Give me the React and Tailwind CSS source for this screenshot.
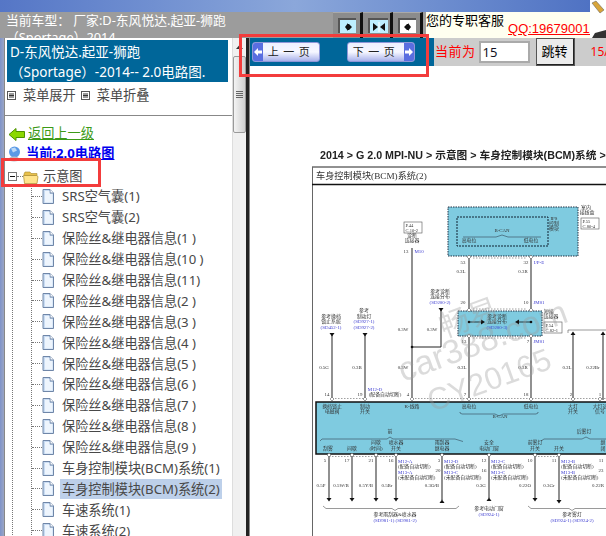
const cjk = '"Noto Sans", "Noto Sans CJK SC", sans-serif'
const arial = '"Liberation Sans", "Noto Sans CJK SC", sans-serif'

const treeItems = [
  'SRS空气囊(1)',
  'SRS空气囊(2)',
  '保险丝&继电器信息(1 )',
  '保险丝&继电器信息(10 )',
  '保险丝&继电器信息(11)',
  '保险丝&继电器信息(2 )',
  '保险丝&继电器信息(3 )',
  '保险丝&继电器信息(4 )',
  '保险丝&继电器信息(5 )',
  '保险丝&继电器信息(6 )',
  '保险丝&继电器信息(7 )',
  '保险丝&继电器信息(8 )',
  '保险丝&继电器信息(9 )',
  '车身控制模块(BCM)系统(1)',
  '车身控制模块(BCM)系统(2)',
  '车速系统(1)',
  '车速系统(2)',
]

function DocIcon() {
  return (
    <svg width="12" height="15" viewBox="0 0 12 15" className="shrink-0">
      <path d="M1 .5h7l3.500 3.500v10.500h-10.500z" fill="#c9dcf3" stroke="#6f86a8" />
      <path d="M8 .5v3.500h3.500" fill="#fff" stroke="#6f86a8" />
      <path d="M3 2h4.500v3h3v8.500h-7.500z" fill="#eef5fd" />
    </svg>
  )
}

function MiniMenuIcon() {
  return (
    <svg width="9" height="9" viewBox="0 0 9 9" className="shrink-0">
      <rect x=".5" y=".5" width="8" height="8" fill="#fff" stroke="#555" />
      <path d="M2 3h5M2 4.500h5M2 6h5" stroke="#333" />
    </svg>
  )
}

function PageButton({ dir, label }) {
  const prev = dir === 'prev'
  return (
    <button className={`w-[68px] h-[20px] flex items-stretch rounded-[3px] border border-[#8f97d8] overflow-hidden bg-gradient-to-b from-[#eef0ff] via-[#f6f7ff] to-[#aab2ea] ${prev ? '' : 'flex-row-reverse'}`}>
      <span className="w-[10px] bg-[#5a6ee0] flex items-center justify-center">
        <svg width="8" height="8" viewBox="0 0 8 8">
          <path d={prev ? 'M0 4l4-4v2.500h4v3h-4v2.500z' : 'M8 4l-4-4v2.500h-4v3h4v2.500z'} fill="#fff" />
        </svg>
      </span>
      <span className="flex-1 text-[11px] leading-[18px] text-center text-[#222] tracking-[4.500px]">{label}</span>
    </button>
  )
}

function TopButton({ inner, icon }) {
  return (
    <div className="w-[30px] h-[26px] bg-[#8c8c8c] border-r-[3px] border-[#111] border-t border-t-[#aaa] pt-[5px] pl-[5px]">
      <div className={`h-[15px] border-l-2 border-t-2 border-[#555] flex items-center justify-center ${inner}`}>
        {icon}
      </div>
    </div>
  )
}

// diagram labels: x, y, text, optional colour
const T = '#333'
const B = '#3b3bd0'
const labels = [
  [412, 237, '诊断'], [412, 242, '连接器'],
  [406, 253, '13'], [419, 253, 'M10', B],
  [463, 264, '53'], [526, 264, '32'], [539, 264, 'I/P-E', B],
  [461, 273, '0.3L'], [523, 273, '0.3R'],
  [502, 232, 'B-CAN'], [469, 242, '高电位'], [531, 242, '低电位'],
  [554, 220, 'IPS'], [554, 225, '控制'], [554, 230, '模块'],
  [586, 209, '室内'], [587, 214, '接线盒'],
  [440, 293, '参考诊断'], [440, 298, '连接分布'], [440, 304, '(SD200-2)', B],
  [463, 304, '20'], [526, 304, '10'], [539, 304, 'JM01', B],
  [497, 318, '参考诊断'], [497, 323, '连接分布'], [497, 329, '(SD200-3)', B],
  [549, 313, '短接'], [551, 318, '连接器'],
  [331, 318, '参考换档'], [331, 323, '锁止系统'], [331, 329, '(SD452-1)', B],
  [364, 312, '参考'], [364, 318, '制动灯'], [364, 323, '(SD927-1)', B], [364, 329, '(SD927-2)', B],
  [403, 331, '0.3W'], [432, 331, '0.3W'],
  [464, 343, '13'], [528, 343, '7'], [539, 343, 'JM01', B],
  [324, 369, '0.5G'], [357, 369, '0.3B'], [403, 369, '0.3W'], [462, 369, '0.3L'], [523, 369, '0.3R'], [567, 369, '0.3L'], [593, 369, '0.22Br'],
  [327, 396, '14'], [360, 396, '19'], [408, 396, '4'], [465, 396, '7'], [526, 396, '18'], [571, 396, '2'], [600, 396, '1'],
  [375, 391, 'M12-D', B], [385, 396, '(配备自动切断)'],
  [332, 408, '换档锁止'], [332, 413, '电磁阀'], [365, 408, '制动'], [365, 413, '开关'], [412, 408, 'K-线路'],
  [469, 408, '高电位'], [531, 408, '低电位'], [573, 408, '大灯'], [573, 413, '开关'], [600, 408, '大灯远'], [600, 413, '信号'],
  [500, 418, 'B-CAN'], [390, 433, '前'], [584, 433, '后雾灯'],
  [328, 450, '刮雾'], [352, 450, '间歇'], [376, 444, '间歇'], [376, 450, '(时间)'], [396, 444, '喷水器'], [396, 450, '开关'],
  [442, 444, '雨刮器'], [442, 450, '继电器'], [489, 444, '安全'], [489, 450, '电动门窗'], [535, 444, '前雾灯'], [535, 450, '开关'], [559, 450, '开关'], [603, 444, '继'], [603, 450, '闭'],
  [325, 462, '5'], [347, 462, '17'], [371, 462, '21'], [391, 462, '16'], [439, 462, '3'], [438, 472, '20'], [484, 462, '12'], [484, 472, '16'], [530, 462, '10'], [554, 462, '11'], [601, 462, '11'], [601, 472, '23'],
  [321, 487, '0.5P'], [341, 487, '0.5W/B'], [366, 487, '0.5Y/B'], [387, 487, '0.5Br'], [432, 487, '0.3O/B'], [481, 487, '0.3G'], [525, 487, '0.22O'], [549, 487, '0.3Gr'], [598, 487, '0.22R'],
  [395, 516, '参考雨刮器&喷水器'], [395, 522, '(SD981-1) (SD981-2)', B],
  [489, 510, '参考电动门窗'], [489, 516, '(SD924-1)', B],
  [572, 516, '参考雾灯'], [572, 522, '(SD924-1) (SD924-2)', B],
]

const sideNotes = [
  [398, 'M12-A', 'M13-A'],
  [444, 'M12-D', 'M13-C'],
  [491, 'M12-C', 'M13-C'],
  [561, 'M12-B', 'M13-B'],
]

const thickWires = [
  [412, 248, 399], [469, 256, 310], [531, 256, 310], [469, 336, 399], [531, 336, 399],
  [332, 333, 400], [365, 333, 400], [573, 333, 400], [603, 333, 400], [441, 310, 347],
]

const downWires = [
  [329, 498, 'd'], [352, 498, 'd'], [376, 498, 'd'], [396, 498, 'd'], [442, 500, 'u'], [489, 498, 'u'], [535, 498, 'd'], [559, 500, 'd'],
]

function Diagram() {
  return (
    <svg width="296" height="396" viewBox="310 140 296 396" className="block ml-[60px] blur-[0.3px]" style={{ fontFamily: '"Liberation Serif", "Noto Sans CJK SC", serif' }}>
      <text x="320" y="159" fontSize="10.700" fontWeight="700" fill="#222" style={{ fontFamily: arial }}>2014 &gt; G 2.0 MPI-NU &gt; 示意图 &gt; 车身控制模块(BCM)系统 &gt;</text>
      <path d="M312 167H606" stroke="#222" />
      <path d="M312.500 167V536" stroke="#666" />
      <text x="316" y="179" fontSize="9.200" fill="#333">车身控制模块(BCM)系统(2)</text>
      <path d="M312 184.500H606" stroke="#111" strokeWidth="1.500" />

      {/* top modules */}
      <rect x="448" y="207" width="130" height="49" fill="#7fcbe0" stroke="#234" strokeDasharray="1.500 1" />
      <rect x="457" y="217" width="91" height="29" fill="none" stroke="#123" strokeDasharray="2 1" />
      <path d="M463 237h33l6-2 6 2h33" fill="none" stroke="#345" strokeWidth=".6" />
      <rect x="458" y="311" width="84" height="25" fill="#7fcbe0" stroke="#234" strokeDasharray="1.500 1" />
      <rect x="316" y="402" width="295" height="52" fill="#7fcbe0" stroke="#111" strokeWidth="1.500" />

      {/* connector boxes */}
      {[[404, 222, 'P.44', 'C.10-2'], [581, 218, 'P.55', 'C.80-4'], [544, 322, 'P.54', 'C.82-1']].map(([x, y, a, b]) => (
        <g key={a} fontSize="4.500" fill="#333">
          <rect x={x} y={y} width="18" height="11" fill="#fff" stroke="#555" strokeWidth=".6" />
          <text x={x + 1.500} y={y + 4.500}>{a}</text>
          <text x={x + 1.500} y={y + 9.500}>{b}</text>
        </g>
      ))}

      {/* dashed connector rows */}
      <path d="M473 258h54M473 309h54M473 338h54M332 398.500h33M412 398.500h194M329 456.500h67M535 456.500h24" stroke="#777" strokeDasharray="1.500 1.500" strokeWidth=".7" />

      {/* wires */}
      {thickWires.map(([x, y1, y2]) => (
        <path key={`${x}-${y1}`} d={`M${x} ${y1}V${y2}`} stroke="#555" strokeWidth="1.300" />
      ))}
      <path d="M441 347H412" stroke="#222" />
      <circle cx="412" cy="347" r="1.300" fill="#111" />
      {downWires.map(([x, end, dir]) => (
        <g key={x}>
          <path d={`M${x} 454V${end}`} stroke="#555" strokeWidth="1.300" />
          <path d={dir === 'd' ? `M${x - 2.500} ${end}h5l-2.500 3.500z` : `M${x - 2.500} ${end + 3}h5l-2.500-3.500z`} fill="#111" />
        </g>
      ))}
      <path d="M438.500 308h5l-2.500 3.500zM329.500 333h5l-2.500 3.500zM362.500 333h5l-2.500 3.500zM570.500 335h5l-2.500-3.500zM600.500 335h5l-2.500-3.500z" fill="#111" />
      <path d="M568 333v-3h38" fill="none" stroke="#555" strokeWidth=".6" />

      {/* junction marks */}
      {[[469, 257], [531, 257], [469, 310], [531, 310], [469, 336], [531, 336], [332, 399], [365, 399], [412, 399], [469, 399], [531, 399], [573, 399], [600, 399], [329, 455], [352, 455], [376, 455], [396, 455], [442, 455], [489, 455], [535, 455], [559, 455]].map(([x, y]) => (
        <path key={`${x}-${y}`} d={`M${x - 2} ${y}l2-2 2 2-2 2z`} fill="#fff" stroke="#444" strokeWidth=".5" />
      ))}

      {/* arrows inside splice box */}
      <circle cx="469" cy="322" r="1.300" fill="#111" />
      <circle cx="531" cy="322" r="1.300" fill="#111" />
      <path d="M469 322h12M519 322h12" stroke="#111" strokeWidth=".8" />
      <path d="M481 319.500v5l4-2.500zM519 319.500v5l-4-2.500z" fill="#111" />

      {/* braces */}
      <path d="M461 412v1l2 1h33l4 2 4-2h33l2-1v-1" transform="translate(-1 0)" fill="none" stroke="#345" strokeWidth=".6" />
      <path d="M320 441l2-2h65l3-2 3 2h62l8 2.500M541 441l3-2h38l4-2 4 2h21" fill="none" stroke="#345" strokeWidth=".6" />
      <path d="M323 506l3 2.500h66l3 2 3-2h58l3-2.500M528 506l3 2.500h38l3 2 3-2h31" fill="none" stroke="#555" strokeWidth=".6" />

      {labels.map(([x, y, s, c], i) => (
        <text key={i} x={x} y={y} fontSize="4.900" textAnchor="middle" fill={c || T}>{s}</text>
      ))}
      {sideNotes.map(([x, a, b]) => (
        <g key={x} fontSize="4.900">
          <text x={x} y={463} fill={B}>{a}</text>
          <text x={x} y={468} fill={T}>(配备自动切断)</text>
          <text x={x} y={474} fill={B}>{b}</text>
          <text x={x} y={479} fill={T}>(未配备自动切断)</text>
        </g>
      ))}

      {/* watermark */}
      <g fill="#9a9a9a" fillOpacity=".36" style={{ fontFamily: arial }}>
        <text x="403" y="382" fontSize="34" transform="rotate(-20 403 382)">car388.com</text>
        <text x="432" y="412" fontSize="31" transform="rotate(-20 432 412)">CY20165</text>
        <text x="444" y="338" fontSize="30" transform="rotate(-20 444 338)">畅易</text>
      </g>
    </svg>
  )
}

export default function App() {
  return (
    <div className="relative w-[606px] h-[536px] overflow-hidden bg-white flex flex-col" style={{ fontFamily: cjk }}>
      {/* top strip */}
      <div className="h-[38px] flex shrink-0">
        <div className="flex-1 flex flex-col min-w-0">
          <div className="h-[12px] bg-gradient-to-r from-[#5576c6] via-[#8ba7da] to-[#4f72c3]" />
          <div className="flex-1 flex bg-[#9c9c9c] overflow-hidden">
            <div className="w-[333px] pl-[6px] pr-[100px] text-white text-[12.800px] leading-[17px] shrink-0">
              当前车型： 厂家:D-东风悦达.起亚-狮跑（Sportage）2014-
            </div>
            <div className="flex items-start">
              <TopButton inner="w-[18px] bg-[#bdeeff]" icon={<svg width="8" height="10" viewBox="0 0 8 10"><path d="M1 5l3-4v8zM4 2h1l3 3-3 3H4z" fill="#111" /></svg>} />
              <TopButton inner="w-[20px] bg-[#bdeeff]" icon={<svg width="14" height="10" viewBox="0 0 14 10"><path d="M1 1l5 4-5 4zM13 1L8 5l5 4z" fill="#111" /><path d="M7 0v10" stroke="#fff" /></svg>} />
              <TopButton inner="w-[18px] bg-white" icon={<svg width="8" height="10" viewBox="0 0 8 10"><path d="M7 5L4 1v8zM4 2H3L0 5l3 3h1z" fill="#111" /></svg>} />
            </div>
            <div className="flex-1 ml-[3px] bg-[#fffff0] flex min-w-0 overflow-hidden">
              <span className="text-[13px] leading-[18px] text-black shrink-0" style={{ fontFamily: arial }}>您的专职客服</span>
              <span className="mt-[8px] ml-[4px] text-[13px] leading-[17px] text-[#f00] underline whitespace-nowrap" style={{ fontFamily: arial }}>QQ:196790017</span>
            </div>
          </div>
        </div>
        <div className="w-[16px] bg-white flex flex-col justify-between shrink-0">
          <svg width="16" height="16" viewBox="0 0 16 16"><path d="M2 3l4-2 8 9-4 3z" fill="#d8a53a" stroke="#555" strokeWidth=".5" /></svg>
          <svg width="16" height="8" viewBox="0 0 16 8"><path d="M2 8l3-5 11-3v8z" fill="#333" /></svg>
        </div>
      </div>

      <div className="flex-1 flex min-h-0">
        {/* left edge */}
        <div className="w-[5px] bg-gradient-to-r from-[#7f93c9] to-[#9aa5c4] border-r border-[#888] shrink-0" />

        {/* side menu */}
        <div className="w-[227px] shrink-0 overflow-hidden text-[#484848]">
          <div className="mt-[2px] ml-[2px] w-[221px] h-[42px] bg-[#006699] text-white text-[13.500px] leading-[20px] pl-[3px] pt-[2px]">
            <div>D-东风悦达.起亚-狮跑</div>
            <div className="whitespace-nowrap">（Sportage）-2014-- 2.0电路图.</div>
          </div>
          <div className="h-[27px] flex items-center pl-[2px] text-[13.200px]">
            <MiniMenuIcon />
            <span className="ml-[7px]">菜单展开</span>
            <span className="ml-[5px]"><MiniMenuIcon /></span>
            <span className="ml-[7px]">菜单折叠</span>
          </div>
          <div className="h-[7px] border-b border-[#888]" />
          <div className="mt-[8px] h-[20px] flex items-center pl-[4px]">
            <svg width="16" height="13" viewBox="0 0 16 13">
              <path d="M0 6.500L7 .5v3h8.500v6H7v3z" fill="#8bd800" stroke="#4d9000" />
            </svg>
            <a className="ml-[3px] text-[13.200px] text-[#3c9a18] underline">返回上一级</a>
          </div>
          <div className="h-[20px] flex items-center pl-[3px]">
            <svg width="13" height="16" viewBox="0 0 13 16">
              <circle cx="6.500" cy="6" r="5.500" fill="#5a9ae6" />
              <ellipse cx="6" cy="13" rx="5" ry="2.500" fill="#b9bdc6" />
              <path d="M3 2.500l4-1 2 3-4 2z" fill="#bcd9f7" />
            </svg>
            <a className="ml-[5px] text-[13.200px] font-bold text-[#0000ee] underline">当前:2.0电路图</a>
          </div>
          <div className="h-[25px] flex items-center pl-[3px]">
            <svg width="9" height="9" viewBox="0 0 9 9" className="shrink-0">
              <rect x=".5" y=".5" width="8" height="8" fill="#fff" stroke="#777" />
              <path d="M2 4.500h5" stroke="#111" />
            </svg>
            <span className="w-[6px] border-t border-dotted border-[#777]" />
            <svg width="16" height="14" viewBox="0 0 16 14" className="shrink-0">
              <path d="M1 4l1-2h5l1 1.500h6v2H1z" fill="#e8c04a" stroke="#a98a2a" strokeWidth=".6" />
              <path d="M.5 5.500h13l1.500 1-1 7H1.500z" fill="#ffe48c" stroke="#a98a2a" strokeWidth=".7" />
            </svg>
            <span className="ml-[4px] text-[13.200px]">示意图</span>
          </div>
          <div className="-mt-[3px] ml-[7px] border-l border-dotted border-[#777]">
            <div className="ml-[18px] border-l border-dotted border-[#777]">
              {treeItems.map((item, i) => (
                <div key={i} className="h-[20.900px] flex items-center">
                  <span className="w-[10px] border-t border-dotted border-[#777] shrink-0" />
                  <DocIcon />
                  <span className={`ml-[6px] px-[2px] h-[20px] leading-[20px] text-[13.200px] whitespace-nowrap ${i === 14 ? 'bg-[#bdd0ea]' : ''}`}>{item}</span>
                </div>
              ))}
            </div>
          </div>
        </div>

        {/* scrollbar */}
        <div className="w-[14px] shrink-0 bg-[#f0f0f0] border-l border-[#ddd]">
          <div className="h-[18px] flex items-center justify-center">
            <svg width="7" height="4" viewBox="0 0 7 4"><path d="M3.500 0l3.500 4H0z" fill="#333" /></svg>
          </div>
          <div className="h-[77px] bg-gradient-to-r from-[#f4f4f4] to-[#cfcfcf] border border-[#9a9a9a] rounded-[2px] flex flex-col items-center justify-center gap-[1px]">
            <span className="w-[7px] h-px bg-[#666]" />
            <span className="w-[7px] h-px bg-[#666]" />
            <span className="w-[7px] h-px bg-[#666]" />
            <span className="w-[7px] h-px bg-[#666]" />
          </div>
        </div>
        <div className="w-[4px] shrink-0 bg-[#222] border-r border-[#888]" />

        {/* page view */}
        <div className="flex-1 min-w-0 overflow-hidden">
          <div className="h-[28px] flex">
            <div className="w-[184px] shrink-0 bg-[#006699] flex items-center pl-[2px]">
              <PageButton dir="prev" label="上一页" />
              <span className="ml-[27px]"><PageButton dir="next" label="下一页" /></span>
            </div>
            <div className="flex-1 bg-[#cccccc] flex items-center pl-[1px] whitespace-nowrap overflow-hidden">
              <span className="shrink-0 text-[13px] text-[#f00] tracking-[0.500px]">当前为</span>
              <input readOnly value="15" className="shrink-0 ml-[3px] w-[51px] h-[22px] bg-white border-2 border-[#aaa] pl-[2px] text-[13px] text-[#112]" />
              <button className="shrink-0 ml-[6px] w-[39px] h-[28px] bg-[#ececec] border-t border-l border-white border-r-2 border-b-2 border-r-[#222] border-b-[#222] outline outline-[#555] -outline-offset-1 text-[13px] text-black">跳转</button>
              <span className="shrink-0 ml-[16px] text-[12px] text-[#f00]">15/</span>
            </div>
          </div>
          <div className="h-[74px]" />
          <Diagram />
        </div>
      </div>

      {/* red callouts drawn over the screenshot */}
      <div className="absolute left-[239px] top-[34px] w-[190px] h-[43px] border-[3px] border-[#f33c3c]" />
      <div className="absolute left-[1px] top-[158px] w-[100px] h-[29px] border-[3px] border-[#f33c3c]" />
    </div>
  )
}
